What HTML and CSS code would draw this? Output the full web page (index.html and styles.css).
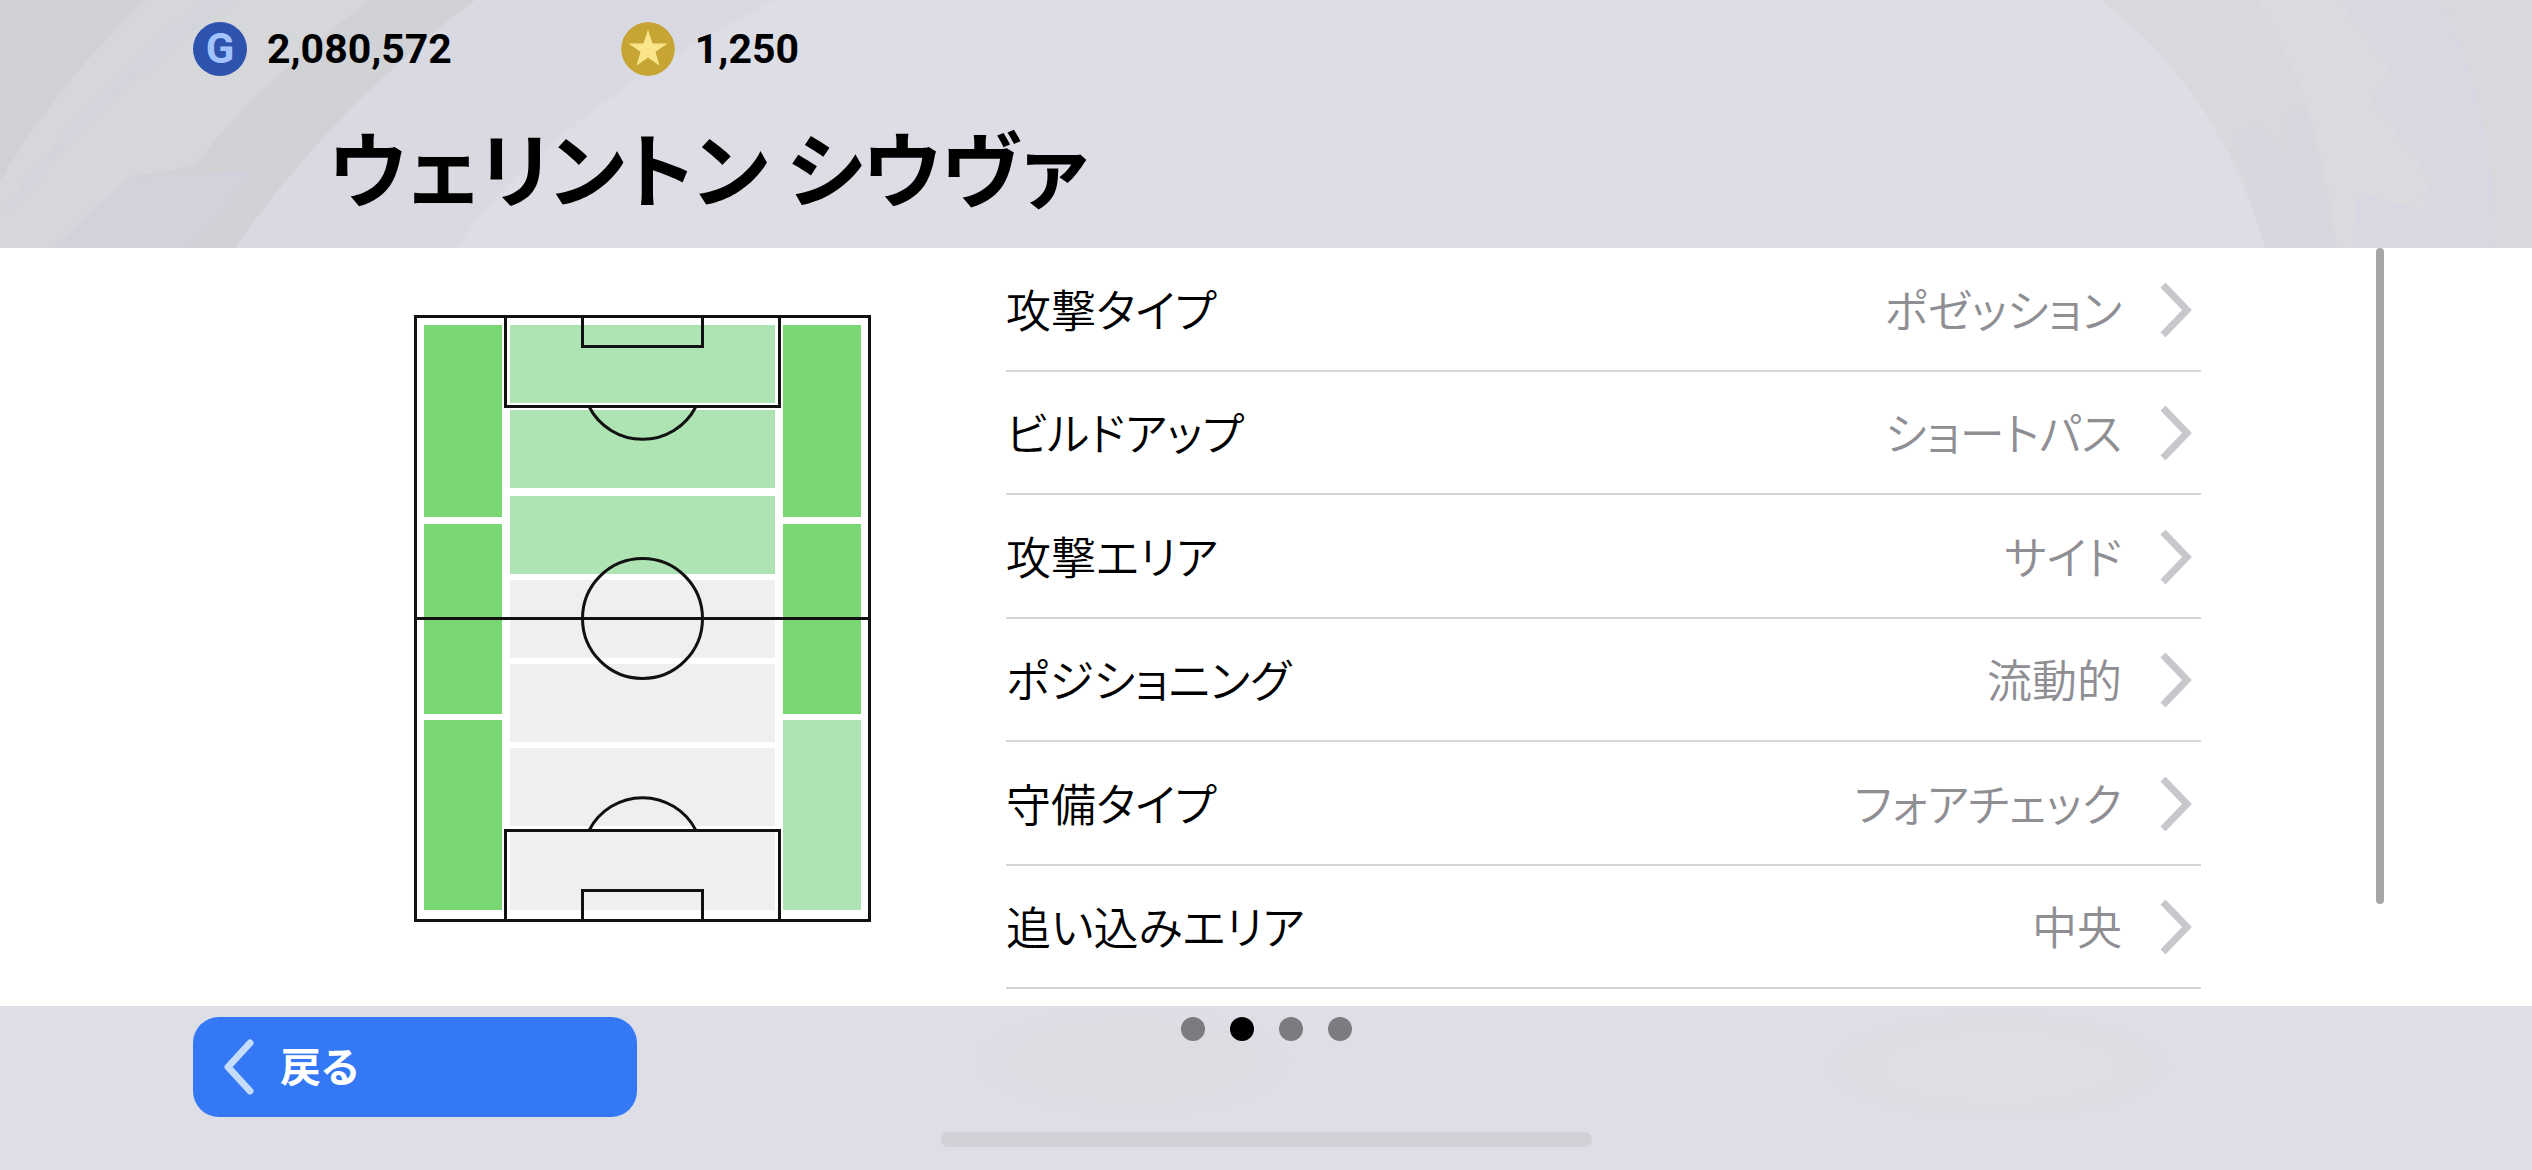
FILE: index.html
```html
<!DOCTYPE html>
<html lang="ja">
<head>
  <meta charset="UTF-8">
  <meta name="viewport" content="width=device-width, initial-scale=1.0">
  <title>ウェリントン シウヴァ</title>
  <link rel="stylesheet" href="styles.css">
</head>
<body>
  <header class="header">
    <svg class="header-art" viewBox="0 0 2532 247" preserveAspectRatio="none" aria-hidden="true">
      <path fill="#d8d9e1" d="M0 0H775Q540 120 457 247H0z"/>
      <path fill="#d1d2d6" d="M0 0H475Q330 110 235 247H0z"/>
      <path fill="#d6d7db" d="M0 0H370Q250 90 195 165L130 176L52 247H0z"/>
      <path fill="#d2d2dc" d="M130 176L255 171L190 247H52z"/>
      <path fill="#d3d4dc" d="M205 0H235Q110 90 20 200L0 215Q90 90 205 0z"/>
      <path fill="#d0d1d5" d="M0 0H145Q60 80 0 180z"/>
      <path fill="#d8d9dd" d="M2100 0Q2220 90 2265 247H2532V0z"/>
      <path fill="#d7d7e0" d="M2232 133L2258 126L2288 158L2285 113L2307 106L2337 247H2265L2243 175z"/>
      <path fill="#dadbdf" d="M2258 0Q2320 100 2337 247H2532V0z"/>
      <path fill="#d8d8e2" d="M2340 0L2393 75L2371 97L2433 180L2422 195L2432 212L2358 192L2352 247H2532V0z"/>
      <path fill="#d8d9dd" d="M2441 0Q2495 110 2495 247H2532V0z"/>
    </svg>

    <div class="wallet">
      <div class="currency">
        <span class="coin coin-gp">G</span>
        <span class="amount">2,080,572</span>
      </div>
      <div class="currency">
        <svg class="coin" viewBox="0 0 54 54" aria-hidden="true">
          <circle cx="27" cy="27" r="27" fill="#c7a535"/>
          <path fill="#fae58b" d="M27 7.500L31.500 21.500H46.500L34.500 29.800L38.500 43.800L27 35.500L15.500 43.800L19.500 29.800L7.500 21.500H22.500z"/>
        </svg>
        <span class="amount">1,250</span>
      </div>
    </div>
    <h1 class="name">ウェリントン シウヴァ</h1>
  </header>

  <main class="main">
    <svg class="field" viewBox="414 314 457 607" role="img" aria-label="攻撃エリア">
      <!-- zones -->
      <g fill="#78d773">
        <path d="M424 324h78v192h-78zM424 523h78v190h-78zM424 719h78v190h-78z"/>
        <path d="M783 324h78v192h-78zM783 523h78v190h-78z"/>
      </g>
      <g fill="#aee3b3">
        <path d="M510 324h265v78h-265zM510 409h265v78h-265zM510 495h265v78h-265z"/>
        <path d="M783 719h78v190h-78z"/>
      </g>
      <path fill="#efefef" d="M510 579h265v78h-265zM510 663h265v78h-265zM510 747h265v78h-265zM510 831h265v78h-265z"/>
      <!-- lines -->
      <g fill="none" stroke="#111" stroke-width="3">
        <path d="M415.500 315.500h454v604h-454zM415.500 617.500h454"/>
        <circle cx="642.500" cy="617.500" r="60"/>
        <path d="M505.500 315.500v90h274v-90M582.500 315.500v30h120v-30M589 405.500A60 60 0 0 0 696 405.500"/>
        <path d="M505.500 919.500v-90h274v90M582.500 919.500v-30h120v30M589 829.500A60 60 0 0 1 696 829.500"/>
      </g>
    </svg>

    <div class="list">
      <button class="row">
        <span class="label">攻撃タイプ</span>
        <span class="value">ポゼッション</span>
        <svg class="arrow" viewBox="0 0 32 54"><path d="M3 2L27 27L3 52"/></svg>
      </button>
      <button class="row">
        <span class="label">ビルドアップ</span>
        <span class="value">ショートパス</span>
        <svg class="arrow" viewBox="0 0 32 54"><path d="M3 2L27 27L3 52"/></svg>
      </button>
      <button class="row">
        <span class="label">攻撃エリア</span>
        <span class="value">サイド</span>
        <svg class="arrow" viewBox="0 0 32 54"><path d="M3 2L27 27L3 52"/></svg>
      </button>
      <button class="row">
        <span class="label">ポジショニング</span>
        <span class="value">流動的</span>
        <svg class="arrow" viewBox="0 0 32 54"><path d="M3 2L27 27L3 52"/></svg>
      </button>
      <button class="row">
        <span class="label">守備タイプ</span>
        <span class="value">フォアチェック</span>
        <svg class="arrow" viewBox="0 0 32 54"><path d="M3 2L27 27L3 52"/></svg>
      </button>
      <button class="row">
        <span class="label">追い込みエリア</span>
        <span class="value">中央</span>
        <svg class="arrow" viewBox="0 0 32 54"><path d="M3 2L27 27L3 52"/></svg>
      </button>
    </div>

    <div class="scrollbar"></div>
  </main>

  <footer class="footer">
    <button class="back">
      <svg class="back-arrow" viewBox="0 0 32 56"><path d="M27 4L5 28L27 52"/></svg>
      <span class="back-text">戻る</span>
    </button>
    <nav class="dots" aria-label="ページ">
      <button class="dot" aria-label="1"></button>
      <button class="dot active" aria-label="2"></button>
      <button class="dot" aria-label="3"></button>
      <button class="dot" aria-label="4"></button>
    </nav>
    <div class="home-bar"></div>
  </footer>
</body>
</html>
```

FILE: styles.css
```css
* {
  box-sizing: border-box;
}

body {
  margin: 0;
  min-height: 100vh;
  display: flex;
  flex-direction: column;
  background: #fff;
  color: #000;
  font-family: "Noto Sans CJK JP", sans-serif;
  font-feature-settings: "palt";
}

button {
  margin: 0;
  padding: 0;
  border: none;
  background: none;
  font: inherit;
  font-feature-settings: inherit;
  color: inherit;
  cursor: pointer;
}

/* header */
.header {
  position: relative;
  padding: 22px 193px 28px;
  background: #dddde6;
}

.header-art {
  position: absolute;
  inset: 0;
  width: 100%;
  height: 100%;
}

.wallet {
  position: relative;
  display: flex;
  gap: 169px;
}

.currency {
  display: flex;
  align-items: center;
  gap: 20px;
}

.coin {
  width: 54px;
  height: 54px;
  border-radius: 50%;
}

.coin-gp {
  display: flex;
  align-items: center;
  justify-content: center;
  background: #2d53ae;
  color: #a2c2fb;
  font: bold 42px/54px Roboto, sans-serif;
}

.amount {
  font: bold 41px/54px Roboto, sans-serif;
}

.name {
  position: relative;
  margin: 36px 0 0 136px;
  font-size: 82px;
  line-height: 108px;
  font-weight: bold;
}

/* content */
.main {
  flex: 1;
  display: flex;
  align-items: flex-start;
  padding: 0 148px 0 414px;
}

.field {
  width: 457px;
  height: 607px;
  margin-top: 67px;
}

.list {
  flex: 1;
  align-self: stretch;
  display: flex;
  flex-direction: column;
  margin: 0 175px 0 135px;
  padding-bottom: 17px;
}

.row {
  flex: 1;
  display: flex;
  align-items: center;
  border-bottom: 2px solid #d6d6d6;
  font-size: 45px;
  line-height: 68px;
  font-weight: 350;
}

.value {
  margin-left: auto;
  color: #8e8e93;
}

.arrow {
  width: 32px;
  height: 54px;
  margin: 2px 9px 0 38px;
  fill: none;
  stroke: #c7c7cc;
  stroke-width: 7;
}

.scrollbar {
  align-self: stretch;
  width: 8px;
  margin-bottom: 102px;
  border-radius: 4px;
  background: #a6a6a6;
}

/* footer */
.footer {
  display: grid;
  grid-template-columns: 1fr auto 1fr;
  row-gap: 15px;
  padding: 11px 193px 23px;
  background:
    radial-gradient(closest-side, #dcdde1 50%, transparent) 44% 0 / 320px 110px no-repeat,
    radial-gradient(closest-side, #dddfe2 60%, transparent) 84% 0 / 380px 120px no-repeat,
    #dedee7;
}

.back {
  display: flex;
  align-items: center;
  gap: 25px;
  width: 444px;
  height: 100px;
  padding-left: 30px;
  border-radius: 26px;
  background: #3478f6;
  color: #fff;
  font-size: 41px;
  line-height: 60px;
  font-weight: bold;
}

.back-arrow {
  width: 32px;
  height: 56px;
  fill: none;
  stroke: #c5dcfb;
  stroke-width: 7;
  stroke-linecap: round;
  stroke-linejoin: round;
}

.back-text {
  padding-bottom: 6px;
}

.dots {
  display: flex;
  gap: 25px;
}

.dot {
  width: 24px;
  height: 24px;
  border-radius: 50%;
  background: #7c7b80;
}

.dot.active {
  background: #000;
}

.home-bar {
  grid-column: 1 / -1;
  justify-self: center;
  width: 651px;
  height: 15px;
  border-radius: 8px;
  background: #d1d2d7;
}
```
